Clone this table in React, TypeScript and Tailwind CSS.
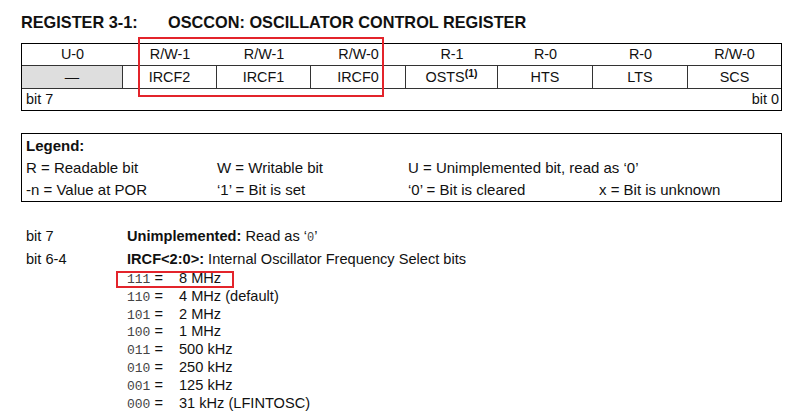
import React from "react";

const sans = { fontFamily: '"Liberation Sans", Arial, sans-serif' };

const access = ["U-0", "R/W-1", "R/W-1", "R/W-0", "R-1", "R-0", "R-0", "R/W-0"];
const names = ["—", "IRCF2", "IRCF1", "IRCF0", "OSTS", "HTS", "LTS", "SCS"];

const freqs: [string, string][] = [
  ["111", "8 MHz"],
  ["110", "4 MHz (default)"],
  ["101", "2 MHz"],
  ["100", "1 MHz"],
  ["011", "500 kHz"],
  ["010", "250 kHz"],
  ["001", "125 kHz"],
  ["000", "31 kHz (LFINTOSC)"],
];

export default function App() {
  return (
    <div
      className="w-[800px] h-[416px] bg-white text-[#111] overflow-hidden pl-[21px] pt-[12px] font-['Liberation_Sans',Arial,sans-serif]"
      style={sans}
    >
      {/* Title */}
      <div className="flex text-[16.3px] leading-[20px] font-bold">
        <span className="w-[147px]">REGISTER 3-1:</span>
        <span>OSCCON: OSCILLATOR CONTROL REGISTER</span>
      </div>

      {/* Register table */}
      <div className="relative mt-[11px] w-[761px]">
        <div className="border border-black text-[14.4px]">
          <div className="grid grid-cols-[101px_94px_94px_95px_92px_95px_95px_93px] h-[22px] border-b border-[#333] leading-[21px]">
            {access.map((a, i) => (
              <div key={i} className="text-center">
                {a}
              </div>
            ))}
          </div>
          <div className="grid grid-cols-[101px_94px_94px_95px_92px_95px_95px_93px] h-[23px] border-b border-[#333] leading-[22px]">
            {names.map((n, i) => (
              <div
                key={i}
                className={
                  "text-center " +
                  (i < 7 ? "border-r border-[#333] " : "") +
                  (i === 0 ? "bg-[#dedede]" : "")
                }
              >
                {n}
                {i === 4 && (
                  <span className="text-[10.5px] font-bold relative -top-[5px] leading-none">(1)</span>
                )}
              </div>
            ))}
          </div>
          <div className="flex justify-between h-[21px] leading-[21px] pl-[4px] pr-[2px]">
            <span>bit 7</span>
            <span>bit 0</span>
          </div>
        </div>
        <div className="absolute left-[117px] top-[-6px] w-[246px] h-[60px] border-2 border-[#e3242b]" />
      </div>

      {/* Legend */}
      <div className="mt-[22px] w-[761px] h-[69px] border border-black pl-[4px] pt-[1px] text-[15px] leading-[22px]">
        <div className="font-bold">Legend:</div>
        <div className="grid grid-cols-[191px_191px_191px_1fr]">
          <span>R = Readable bit</span>
          <span>W = Writable bit</span>
          <span className="col-span-2">U = Unimplemented bit, read as ‘0’</span>
          <span>-n = Value at POR</span>
          <span>‘1’ = Bit is set</span>
          <span>‘0’ = Bit is cleared</span>
          <span>x = Bit is unknown</span>
        </div>
      </div>

      {/* Bit descriptions */}
      <div className="mt-[23px] pl-[5px] text-[14.6px]">
        <div className="flex h-[23px] leading-[23px]">
          <span className="w-[101px]">bit 7</span>
          <span>
            <b>Unimplemented:</b> Read as ‘
            <span className="font-['Liberation_Mono',monospace] text-[12px] text-[#444]">0</span>’
          </span>
        </div>
        <div className="flex h-[22px] leading-[22px]">
          <span className="w-[101px]">bit 6-4</span>
          <span>
            <b>IRCF&lt;2:0&gt;:</b> Internal Oscillator Frequency Select bits
          </span>
        </div>
        <div className="pl-[101px]">
          {freqs.map(([code, val], i) => (
            <div key={code} className="relative flex h-[17.8px] leading-[17.8px]">
              <span className="w-[52px]">
                <span className="font-['Liberation_Mono',monospace] text-[13px] text-[#444]">{code}</span> =
              </span>
              <span>{val}</span>
              {i === 0 && (
                <div className="absolute left-[-11px] top-[1px] w-[118px] h-[17px] border-2 border-[#e3242b]" />
              )}
            </div>
          ))}
        </div>
      </div>
    </div>
  );
}
